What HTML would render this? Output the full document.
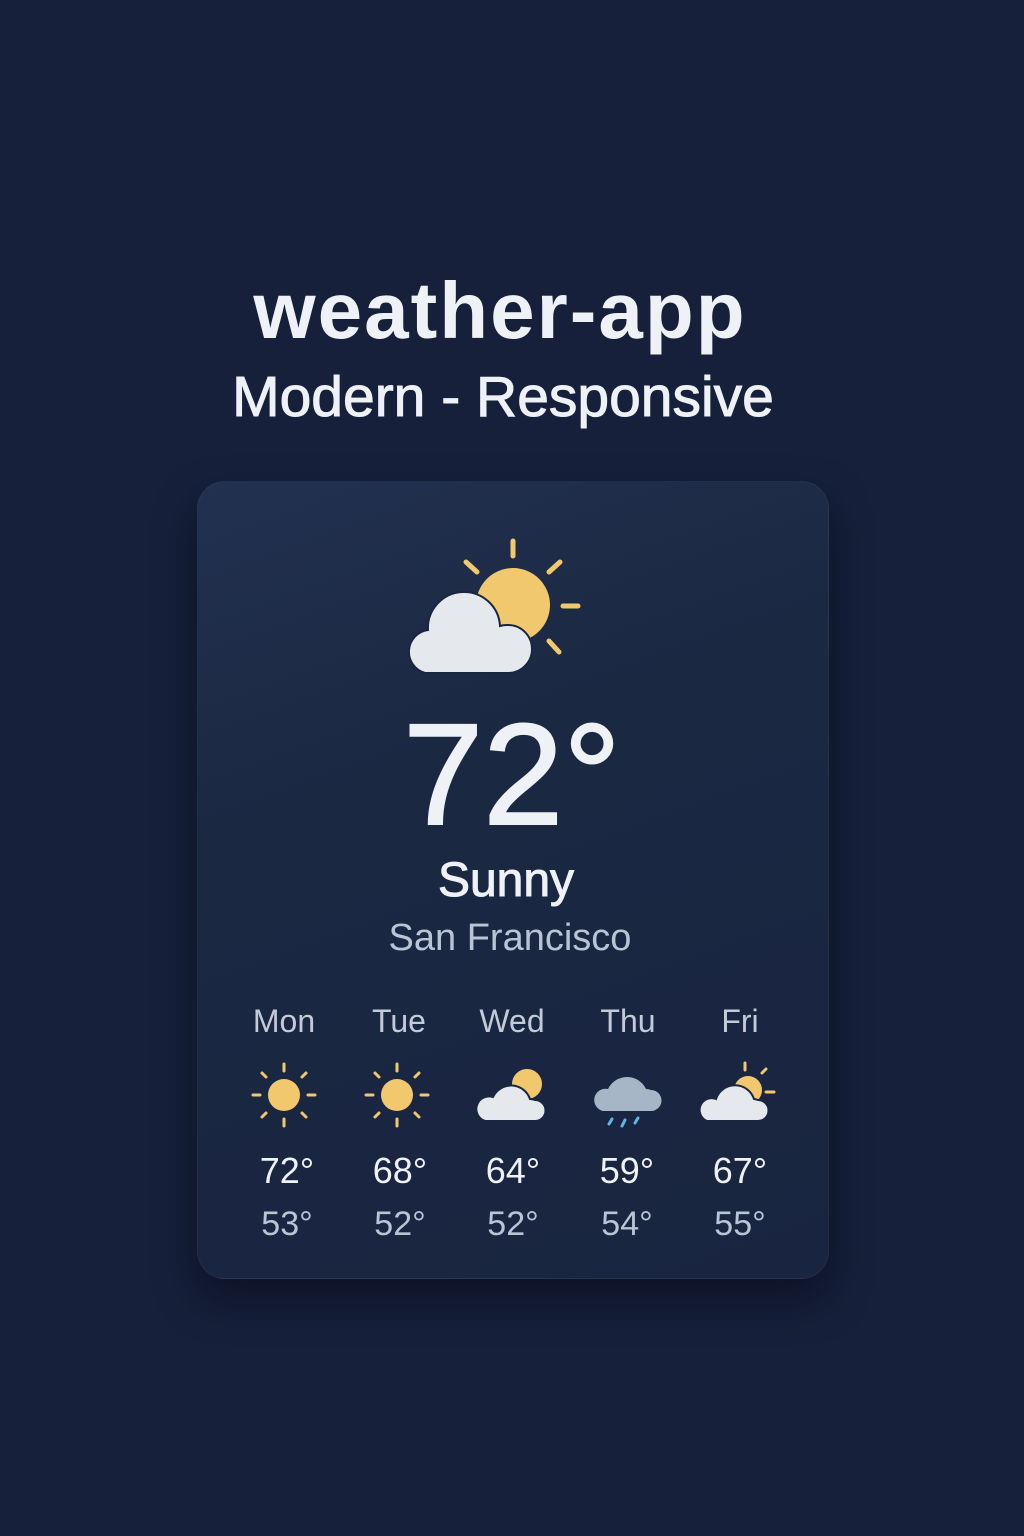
<!DOCTYPE html>
<html><head><meta charset="utf-8"><style>
html,body{margin:0;padding:0}
body{width:1024px;height:1536px;background:#16203a;font-family:"Liberation Sans","DejaVu Sans",sans-serif;position:relative;overflow:hidden;color:#eef1f5}
.t{position:absolute;left:0;width:1000px;text-align:center;white-space:nowrap}
.card{position:absolute;left:197px;top:481px;width:630px;height:796px;border-radius:28px;background:linear-gradient(160deg,#223150 0%,#1b2842 35%,#192540 100%);box-shadow:0 20px 40px rgba(5,10,25,.55);border:1px solid rgba(255,255,255,.04)}
.c{position:absolute;text-align:center;width:120px;margin-left:-60px;white-space:nowrap}
</style></head><body>
<div class="t" style="top:265px;font-size:80px;font-weight:700;letter-spacing:2px">weather-app</div>
<div class="t" style="top:364px;left:3px;font-size:57px;font-weight:400;-webkit-text-stroke:1px #eef1f5">Modern - Responsive</div>
<div class="card"></div>
<svg style="position:absolute;left:0;top:0" width="1024" height="1536">
<g stroke="#f2c86e" stroke-width="5" stroke-linecap="round">
<line x1="513" y1="541" x2="513" y2="556"/><line x1="466" y1="562" x2="477" y2="572"/><line x1="560" y1="562" x2="549" y2="572"/><line x1="563" y1="606" x2="578" y2="606"/><line x1="549" y1="641" x2="559" y2="652"/></g>
<circle cx="513" cy="605" r="37" fill="#f2c86e"/>
<path d="M425 673 H508 A20 20 0 0 0 508 625 A22 22 0 0 0 500 626 A36 36 0 0 0 428 630 A22 22 0 0 0 425 673 Z" fill="#e5e8ec" stroke="#1a2640" stroke-width="2"/>
<g id="sun1">
<g stroke="#f2c86e" stroke-width="3" stroke-linecap="round">
<line x1="284" y1="1064" x2="284" y2="1071"/><line x1="284" y1="1119" x2="284" y2="1126"/><line x1="253" y1="1095" x2="260" y2="1095"/><line x1="308" y1="1095" x2="315" y2="1095"/>
<line x1="262" y1="1073" x2="266" y2="1077"/><line x1="302" y1="1113" x2="306" y2="1117"/><line x1="306" y1="1073" x2="302" y2="1077"/><line x1="266" y1="1113" x2="262" y2="1117"/></g>
<circle cx="284" cy="1095" r="16" fill="#f2c86e"/></g>
<use href="#sun1" x="113"/>
<circle cx="527" cy="1084" r="15" fill="#f2c86e"/>
<path d="M485 1121 H535 A10 10 0 0 0 535 1100 A13 13 0 0 0 530 1099 A20 20 0 0 0 493 1097 A12 12 0 0 0 485 1121 Z" fill="#e5e8ec" stroke="#1a2640" stroke-width="2"/>
<path d="M603 1111 H651 A10 10 0 0 0 651 1090 A14 14 0 0 0 646 1089 A21 21 0 0 0 608 1089 A11 11 0 0 0 603 1111 Z" fill="#a7b6c6"/>
<g stroke="#5fb5e3" stroke-width="3" stroke-linecap="round"><line x1="612" y1="1119" x2="609" y2="1124"/><line x1="625" y1="1120" x2="622" y2="1126"/><line x1="638" y1="1118" x2="635" y2="1123"/></g>
<g stroke="#f2c86e" stroke-width="3" stroke-linecap="round"><line x1="745" y1="1063" x2="745" y2="1070"/><line x1="762" y1="1073" x2="766" y2="1069"/><line x1="766" y1="1092" x2="774" y2="1092"/></g>
<circle cx="748" cy="1090" r="14" fill="#f2c86e"/>
<path d="M707 1121 H758 A10 10 0 0 0 758 1100 A13 13 0 0 0 754 1099 A20 20 0 0 0 716 1099 A11 11 0 0 0 707 1121 Z" fill="#e5e8ec" stroke="#1a2640" stroke-width="2"/>
</svg>
<div class="t" style="top:692px;left:12px;font-size:144px;font-weight:400;-webkit-text-stroke:2px #eef1f5">72°</div>
<div class="t" style="top:853px;left:6px;font-size:48px;-webkit-text-stroke:1px #eef1f5">Sunny</div>
<div class="t" style="top:917px;left:10px;font-size:38px;color:#b9c4d4">San Francisco</div>
<div style="position:absolute;top:1003px;left:0;font-size:32px;color:#c3cbd8">
<div class="c" style="left:284px">Mon</div><div class="c" style="left:399px">Tue</div><div class="c" style="left:512px">Wed</div><div class="c" style="left:628px">Thu</div><div class="c" style="left:740px">Fri</div></div>
<div style="position:absolute;top:1150px;left:0;font-size:36px;color:#eef1f5">
<div class="c" style="left:287px">72°</div><div class="c" style="left:400px">68°</div><div class="c" style="left:513px">64°</div><div class="c" style="left:627px">59°</div><div class="c" style="left:740px">67°</div></div>
<div style="position:absolute;top:1205px;left:0;font-size:34px;color:#b9c4d4">
<div class="c" style="left:287px">53°</div><div class="c" style="left:400px">52°</div><div class="c" style="left:513px">52°</div><div class="c" style="left:627px">54°</div><div class="c" style="left:740px">55°</div></div>
</body></html>
